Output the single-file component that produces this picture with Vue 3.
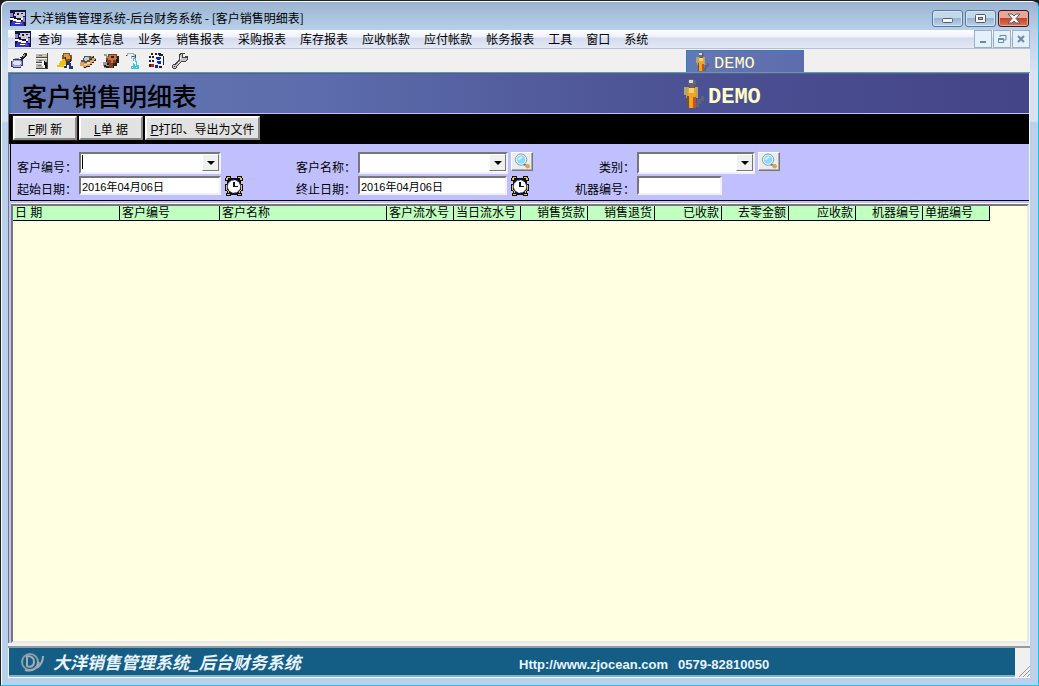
<script setup>
import { ref } from 'vue'

const menus = ['查询', '基本信息', '业务', '销售报表', '采购报表', '库存报表', '应收帐款', '应付帐款', '帐务报表', '工具', '窗口', '系统']

const tools = [
  { name: '查询', parts: [['#34346c', 'M2 6h8v1h2v6h-2v2H2v-1H0V8h2z'], ['#9494d8', 'M2 7h8v1h1v4h-1v2H2v-1H1V8h1z'], ['#e4e4f8', 'M3 8h6v1h1v2H9v1H3v-1H2V9h1z'], ['#222', 'M13 0h3v3h-1v1h-1v1h-1v1h-1v1H9V6h1V5h-1V4h2V3h1V1h1z'], ['#999', 'M13 1h1v2h-1v1h-1V2h1zM4 5h4v1H4z'], ['#b8b8d8', 'M3 13h6v1H3z']] },
  { name: '档案', parts: [['#b8b8b0', 'M2 0h12v16H2z'], ['#f4f4f0', 'M2 0h11v1H2zM2 5h11v1H2zM2 10h11v1H2z'], ['#444', 'M13 0h1v16H2v-1h11zM2 4h11v1H2zM2 9h11v1H2z'], ['#eee800', 'M9 2h3v1H9z'], ['#fff', 'M8 8h2v1h1v1h1v2h-1v3H9v-2H8z'], ['#111', 'M10 8h1v1h1v1h1v5h-2v-3h-1z'], ['#777', 'M5 2h3v1H5zM5 7h3v1H5zM4 12h3v1H4z']] },
  { name: '业务员', parts: [['#8b5518', 'M6 0h7v2h2v6h-3v2H9V8H6V6H5V2h1z'], ['#d89a50', 'M7 1h5v2h1v3H8V4H7z'], ['#f0c010', 'M5 6h3v2h1v4H7v2H0v-2h2v-2h1V8h2z'], ['#24386c', 'M9 8h4v2h1v3h2v3h-4v-4h-2v3H7v-2h2z'], ['#222', 'M8 4h1v2H8zM13 6h1v3h-1zM9 11h2v1H9z']] },
  { name: '交货', parts: [['#e0a060', 'M0 9h5V7h3V5h3V3h3v2h2v2h-2v2h-2v2h-2v2H7v2H3v-2H0z'], ['#555', 'M4 3h7v1h1v3h-2v2H7v1H4V9H1V7h2V5h1z'], ['#c8cbc8', 'M5 4h4v3H7v1H5V7H4V5h1z'], ['#222', 'M13 3h1v2h-2v2h-2V6h2V4h1zM15 6h1v2h-2v2h-2v2h-2v2H6v1H4v-1h2v-1h4v-2h2V9h2V7h1z'], ['#f8d8a0', 'M7 9h3v2H7v1H4v-1h3z']] },
  { name: '装箱', parts: [['#8a3d1c', 'M5 1h9v2h2v7h-3v3h-3v2H6v-2H3V5h2z'], ['#c9733e', 'M6 2h7v3h1v2h-4v3H8V7H5V4h1z'], ['#222', 'M14 3h2v7h-2v3h-3v2h-1v-5h3V6h1zM8 3h3v2H8zM3 7h1v3h2v2H3z'], ['#999', 'M1 1h3v2h1v2H3V3H1zM0 9h4v3h2v3H1v-2H0z'], ['#222', 'M1 12h2v1h3v2H3v-1H1z']] },
  { name: '流水', parts: [['#9cb0b6', 'M1 0h7v1h2v4H8V3H6v3H5V3H1z'], ['#e8f2f4', 'M2 1h5v1h1v1H2z'], ['#444', 'M0 2h1v1H0zM9 2h1v3H9zM6 3h2v1H6z'], ['#35c9dc', 'M7 5h3v3h1v4h2v4H5v-3h2v-3h1V8H7z'], ['#fff', 'M8 6h1v3h1v4H9v-2H8zM6 14h1v1H6zM10 14h1v1h-1z']] },
  { name: '核对', parts: [['#f4f4f6', 'M3 1h11v12H3z'], ['#222', 'M2 0h2v2H2zM6 0h2v2H6zM9 0h3v1h2v2h-4V2H9zM0 3h2v2H0zM3 3h2v2H3zM0 7h2v2H0zM3 7h2v2H3zM14 3h1v9h-1zM10 13h3v2h-3zM0 11h2v3H0z'], ['#1420d0', 'M7 4h5v2h-1v1H8V6H7zM8 8h4v3H9v-1H8zM6 12h3v3H6z'], ['#b82020', 'M2 11h3v3H2z']] },
  { name: '设置', parts: [['#444', 'M8 0h5v1h-2v3h2V3h3v4h-1v1h-1v1H9v1H8v1H7v1H6v1H5v2H4v1H1v-1H0v-3h1v-1h2v-1h1V9h1V8h1V7h1V1h1z'], ['#c4c4c4', 'M9 1h1v4h5v2h-1v1H9v1H8v1H7v1H6v1H5v1H4v2H1v-3h3v-1h1v-1h1V9h1V8h1V2h1z'], ['#fff', 'M8 4h1v2H8zM6 9h1v1H6z'], ['#444', 'M2 13h1v1H2z']] }
]

const columns = [
  { label: '日 期', width: 107 },
  { label: '客户编号', width: 100 },
  { label: '客户名称', width: 167 },
  { label: '客户流水号', width: 67 },
  { label: '当日流水号', width: 67 },
  { label: '销售货款', width: 67, right: true },
  { label: '销售退货', width: 67, right: true },
  { label: '已收款', width: 67, right: true },
  { label: '去零金额', width: 67, right: true },
  { label: '应收款', width: 67, right: true },
  { label: '机器编号', width: 67, right: true },
  { label: '单据编号', width: 67 }
]

const startDate = ref('2016年04月06日')
const endDate = ref('2016年04月06日')
const machine = ref('')
</script>

<template>
  <svg class="defs" aria-hidden="true">
    <symbol id="app-icon" viewBox="0 0 16 16">
      <path fill="#14143c" d="M0 0h16v16H0z" />
      <path fill="#3434c8" d="M2 11h11v2h1v3H1v-3h1z" />
      <path fill="#8a84d8" d="M0 3h3v4H0zM13 7h2v5h-2z" />
      <path fill="#c8c8d8" d="M5 2h10v4h-2v2H6V6H4V4h1z" />
      <path fill="#14143c" d="M7 3h2v2H7zM11 3h2v1h-2z" />
      <path fill="#fff" d="M0 8h4v1h3v1h4V8h2v2h-2v2H6v-1H3v-1H0zM5 13h5v1H5z" />
      <path fill="#e85090" d="M10 13h2v1h-2z" />
    </symbol>
    <symbol id="person" viewBox="0 0 20 30">
      <path fill="#5f6478" d="M13 20h4v-3h3v5h-3v3h-2v3H9v-4h4z" />
      <path fill="#b5a56a" d="M0 8h5v11H2v-3H0zM11 8h3v11h-3z" />
      <path fill="#f0a428" d="M4 9h8v20H5V17H4z" />
      <path fill="#ffd070" d="M5 9h5v5H5z" />
      <path fill="#c65418" d="M9 18h3v11H9z" />
      <path fill="#805018" d="M3 17h2v11H3z" />
      <path fill="#666" d="M4 2h1V0h5v1h2v5h-2v3H6V6H4z" />
      <path fill="#ddd" d="M5 1h4v3H5z" />
    </symbol>
    <symbol id="clock" viewBox="0 0 20 20">
      <path fill="#111" d="M2 0h5v2h6V0h5v2h1v3h-2v3h2v7h-2v2h1v3h-5v-1H7v1H2v-3h1v-2H1V8h2V5H1V2h1z" />
      <path fill="#e0c050" d="M3 1h3v1H4v2H2V2h1zM14 1h3v1h1v2h-2V2h-2zM2 9h1v6h2v2h2v1h6v-1h2v-2h2V9h1v5h-2v3h-3v1H7v-1H4v-3H2zM3 18h3v1H3zM14 18h3v1h-3z" />
      <circle cx="10" cy="10.500" r="6.500" fill="#fff" stroke="#2038c8" stroke-dasharray="2 2" />
      <path fill="#111" d="M9 6h2v4h3v1H9z" />
    </symbol>
    <symbol id="lens" viewBox="0 0 18 18">
      <circle cx="8" cy="7" r="6" fill="#eef8fc" stroke="#6f9cbc" />
      <circle cx="8" cy="7" r="4.500" fill="#8fd8f8" />
      <path stroke="#d8f4ff" stroke-width="2" d="M5 7l4-3" />
      <path stroke="#777" stroke-width="2" d="M11 12l2 1" />
      <circle cx="15" cy="14" r="2" fill="#eea63c" stroke="#b98238" stroke-width=".5" />
    </symbol>
  </svg>

  <main class="window">
    <header class="titlebar">
      <svg class="appicon"><use href="#app-icon" /></svg>
      <h1>大洋销售管理系统-后台财务系统 - [客户销售明细表]</h1>
      <div class="controls">
        <button aria-label="最小化"><svg viewBox="0 0 29 15"><rect x="9.500" y="7.500" width="10" height="4" rx="1" fill="#f5f5f5" stroke="#555b6b" /></svg></button>
        <button aria-label="最大化"><svg viewBox="0 0 29 15"><rect x="9.500" y="3.500" width="10" height="8" rx="1" fill="#f5f5f5" stroke="#555b6b" /><rect x="12.500" y="6.500" width="4" height="2" fill="#9dbad6" stroke="#555b6b" /></svg></button>
        <button class="close" aria-label="关闭"><svg viewBox="0 0 29 15"><path d="M9 3h4l2 2 2-2h4l-4 4.500 4 4.500h-4l-2-2-2 2H9l4-4.500z" fill="#f5f5f5" stroke="#555b6b" /></svg></button>
      </div>
    </header>

    <div class="client">
      <nav class="menubar">
        <svg class="appicon"><use href="#app-icon" /></svg>
        <button v-for="m in menus" :key="m" class="menu">{{ m }}</button>
        <div class="childctl">
          <button aria-label="最小化子窗口"><svg viewBox="0 0 16 16"><path fill="#6a88a8" d="M5 10h6v2H5z" /></svg></button>
          <button aria-label="还原子窗口"><svg viewBox="0 0 16 16"><path fill="none" stroke="#6a88a8" d="M6 6V4.500h6V9H10M4.500 7.500h5v4h-5zM4 8.500h6" /></svg></button>
          <button aria-label="关闭子窗口"><svg viewBox="0 0 16 16"><path stroke="#6a88a8" stroke-width="2" d="M5 5l6 6M11 5l-6 6" /></svg></button>
        </div>
      </nav>

      <div class="toolbar">
        <button v-for="t in tools" :key="t.name" class="tool" :aria-label="t.name">
          <svg viewBox="0 0 16 16" shape-rendering="crispEdges"><path v-for="(p, i) in t.parts" :key="i" :fill="p[0]" :d="p[1]" /></svg>
        </button>
        <div class="badge"><svg><use href="#person" /></svg><span>DEMO</span></div>
      </div>

      <section class="child">
        <div class="banner">
          <h2>客户销售明细表</h2>
          <div class="demo"><svg><use href="#person" /></svg><span>DEMO</span></div>
        </div>

        <div class="actions">
          <button class="primary"><u>F</u>刷 新</button>
          <button><u>L</u>单 据</button>
          <button class="wide"><u>P</u>打印、导出为文件</button>
        </div>

        <form class="filters" @submit.prevent>
          <label for="cno">客户编号：</label>
          <div class="field">
            <div class="combo c1"><select id="cno"><option></option></select><i class="caret"></i><i class="arrow"></i></div>
          </div>
          <label for="cname">客户名称：</label>
          <div class="field">
            <div class="combo c2"><select id="cname"><option></option></select><i class="arrow"></i></div>
            <button class="find" aria-label="查找客户"><svg><use href="#lens" /></svg></button>
          </div>
          <label for="kind">类别：</label>
          <div class="field">
            <div class="combo c3"><select id="kind"><option></option></select><i class="arrow"></i></div>
            <button class="find" aria-label="查找类别"><svg><use href="#lens" /></svg></button>
          </div>

          <label for="from">起始日期：</label>
          <div class="field">
            <input id="from" v-model="startDate" class="d1" type="text">
            <button class="clock" aria-label="选择起始日期"><svg><use href="#clock" /></svg></button>
          </div>
          <label for="to">终止日期：</label>
          <div class="field">
            <input id="to" v-model="endDate" class="d2" type="text">
            <button class="clock" aria-label="选择终止日期"><svg><use href="#clock" /></svg></button>
          </div>
          <label for="machine">机器编号：</label>
          <div class="field"><input id="machine" v-model="machine" class="d3" type="text"></div>
        </form>

        <div class="grid">
          <table>
            <colgroup><col v-for="c in columns" :key="c.label" :style="{ width: c.width + 'px' }"></colgroup>
            <thead>
              <tr><th v-for="c in columns" :key="c.label" :class="{ right: c.right }">{{ c.label }}</th></tr>
            </thead>
          </table>
        </div>
      </section>

      <footer class="status">
        <div class="bar">
          <svg class="logo" viewBox="0 0 26 22" fill="none"><circle cx="10" cy="11" r="8" stroke="#8f9ba6" stroke-width="2" /><path stroke="#a3acb4" stroke-width="2" d="M7 5v10c3 2 7 0 7-4s-3-6-7-6M17 17c4-3 6-7 6-12M5 19c8 2 12-1 14-8" /></svg>
          <strong class="name">大洋销售管理系统_后台财务系统</strong>
          <div class="contact"><a href="#">Http://www.zjocean.com</a><span>0579-82810050</span></div>
        </div>
        <svg class="grip" viewBox="0 0 12 12"><path stroke="#999" d="M1 12L12 1M5 12l7-7M9 12l3-3" /></svg>
      </footer>
    </div>
  </main>
</template>

<style>
body { margin: 0; background: #1c1c24; }
</style>

<style scoped>
* { box-sizing: border-box; }
button, input, select { font: inherit; color: inherit; margin: 0; padding: 0; border: 0; background: none; border-radius: 0; }
svg { display: block; }
.defs { position: absolute; width: 0; height: 0; }
.window {
  display: flex; flex-direction: column; min-height: 100vh; padding: 0 8px 7px 7px;
  border: 1px solid #222; border-right-color: #19c8e8; border-bottom-color: #19c8e8; border-radius: 7px 7px 0 0;
  background: linear-gradient(#98b2d1, #b9d1ea 30px, #d5e3f3 70px, #d5e3f3 120px, #b9d1ea 122px);
  box-shadow: inset 1px 1px #f4faff;
  font: 12px/16px "Liberation Sans", "Noto Sans CJK SC", sans-serif; color: #000;
}
.titlebar { display: flex; align-items: center; height: 29px; padding: 5px 1px 0 2px; gap: 4px; }
.appicon { width: 16px; height: 16px; flex: none; shape-rendering: crispEdges; }
h1 { margin: 0; font-size: 12px; line-height: 16px; font-weight: 400; font-family: "Noto Sans CJK SC", sans-serif; white-space: nowrap; }
.controls { display: flex; gap: 2px; margin-left: auto; }
.controls button { width: 31px; height: 17px; border: 1px solid #5c7696; border-radius: 3px; background: linear-gradient(#c4d8ed 45%, #98b4d3 50%, #b8d3ec); box-shadow: inset 0 0 0 1px #d4e4f4; }
.controls .close { border-color: #431422; background: linear-gradient(#e5a89b 45%, #c44426 50%, #d77c55); box-shadow: inset 0 0 0 1px #e8aa98; }
.controls svg { width: 29px; height: 15px; }
.client { display: flex; flex-direction: column; flex: 1; background: #f0f0f0; border-bottom: 1px solid #fff; }
.menubar { display: flex; align-items: center; height: 19px; padding-left: 7px; background: linear-gradient(#fff, #edf0f8 7px, #d5dbee 8px, #e3e9f5); border-bottom: 1px solid #b5bfd8; }
.menu { padding: 0 7px; white-space: nowrap; font-family: "Noto Sans CJK SC", sans-serif; line-height: 16px; }
.childctl { display: flex; gap: 1px; margin-left: auto; }
.childctl button { width: 18px; height: 18px; border: 1px solid #9bb0c4; background: #e4f0fa; }
.childctl svg { width: 16px; height: 16px; }
.toolbar { display: flex; align-items: center; height: 24px; padding-left: 3px; gap: 7px; border-bottom: 1px solid #8b8b8b; }
.tool { width: 16px; height: 16px; flex: none; }
.tool svg { width: 16px; height: 16px; }
.badge, .demo { display: flex; align-items: center; color: #ffffc8; font-family: "Liberation Mono", monospace; }
.badge svg, .demo svg { shape-rendering: crispEdges; flex: none; }
.badge { width: 118px; height: 22px; align-self: flex-end; margin-left: 491px; padding-left: 6px; gap: 2px; font-size: 17px; line-height: 20px; background: linear-gradient(90deg, #5c7ab8, #6874b2 20%, #5c6cac); border: 2px solid #347dc4; border-width: 1px 0 0 1px; }
.badge svg { width: 19px; height: 20px; }
.badge span { padding-top: 4px; }
.child { display: flex; flex-direction: column; flex: 1; border-left: 1px solid #777; border-right: 1px solid #f4f4f4; background: #c0c0ff; }
.banner { display: flex; align-items: center; height: 41px; padding-left: 11px; background: linear-gradient(90deg, #6478b4, #5c6cac 30%, #4c5294 65%, #444488); border: 1px solid #2c6cb0; border-right: 0; border-bottom-color: #c0c0ff; border-left: 2px solid #347dc4; }
h2 { margin: 0; width: 661px; font: 500 25px/36px "Noto Sans CJK SC", sans-serif; padding-top: 2px; }
.demo { font-size: 22px; line-height: 26px; font-weight: 700; gap: 4px; }
.demo svg { width: 21px; height: 30px; }
.demo span { padding-top: 8px; }
.actions { display: flex; align-items: center; gap: 2px; height: 30px; padding: 0 4px 2px; background: #000; }
.actions button { width: 64px; height: 24px; padding-top: 3px; background: #e2e2e2; border: 2px solid; border-color: #fff #888 #888 #fff; white-space: nowrap; }
.actions .primary { outline: 1px solid #2c1218; }
.actions .wide { width: 115px; }
.filters {
  display: grid; grid-template-columns: 66px 209px 66px 209px 66px 1fr; grid-template-rows: 22px 20px; column-gap: 2px; row-gap: 2px;
  height: 57px; padding: 8px 0 0; border-left: 1px solid #000; border-bottom: 1px solid #000; margin-left: 1px;
}
.filters label { text-align: right; align-self: end; line-height: 12px; white-space: nowrap; }
.field { display: flex; align-items: flex-start; gap: 3px; }
.combo { position: relative; height: 22px; }
.combo select { display: block; appearance: none; width: 100%; height: 22px; }
.combo select, .field input { background: #fff; border: 2px solid; border-color: #777 #f0f0ff #f0f0ff #777; outline: 0; }
.field input { height: 19px; padding-left: 1px; font-size: 11px; line-height: 14px; }
.c1 { width: 142px; }
.c2 { width: 150px; }
.c3 { width: 118px; }
.d1 { width: 142px; }
.d2 { width: 149px; }
.d3 { width: 85px; }
.arrow { position: absolute; right: 2px; top: 2px; width: 17px; height: 17px; background: #f0f0f0; border: 1px solid; border-color: #fff #777 #777 #fff; pointer-events: none; }
.arrow::after { content: ""; position: absolute; left: 4px; top: 6px; border: 4px solid transparent; border-top-color: #000; border-bottom: 0; }
.caret { position: absolute; left: 3px; top: 3px; width: 1px; height: 14px; background: #000; pointer-events: none; }
.find { width: 22px; height: 19px; border: 1px solid; border-color: #fff #777 #777 #fff; background: #ececec; box-shadow: inset -1px -1px #aaa; }
.find svg { width: 18px; height: 17px; margin: 0 auto; }
.clock, .clock svg { width: 20px; height: 20px; }
.grid { flex: 1; margin-top: 3px; margin-left: 2px; min-height: 200px; background: #ffffe1; border: 2px solid; border-color: #777 #e8e8e8 #e8e8e8 #777; box-shadow: 0 -1px #fff; }
table { table-layout: fixed; border-collapse: separate; border-spacing: 0; width: 977px; }
th { height: 15px; padding: 1px 2px 0; overflow: hidden; white-space: nowrap; font-weight: 400; font-size: 12px; line-height: 13px; text-align: left; background: #c0ffc0; border-right: 1px solid #000; border-bottom: 1px solid #000; }
th.right { text-align: right; }
.status { display: flex; height: 31px; border-top: 2px solid #999; margin-top: 3px; }
.bar { display: flex; align-items: center; flex: 1; margin-left: 1px; padding-left: 11px; background: #145e86; color: #e8f4ff; border-bottom: 2px solid #7fb2cc; }
.logo { width: 26px; height: 22px; }
.name { width: 466px; padding-left: 7px; padding-top: 1px; font: italic 700 17px/22px "Noto Sans CJK SC", sans-serif; white-space: nowrap; }
.contact { display: flex; gap: 10px; padding: 6px 0 0 7px; font-size: 13px; font-weight: 700; white-space: nowrap; }
.contact a { color: inherit; text-decoration: none; }
.grip { width: 12px; height: 12px; margin: 17px 0 0 3px; }
</style>
